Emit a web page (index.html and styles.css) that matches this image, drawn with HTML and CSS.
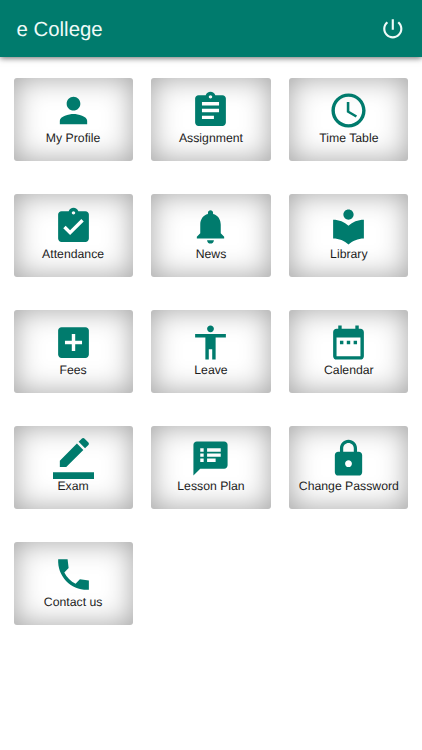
FILE: index.html
```html
<!DOCTYPE html>
<html lang="en">
<head>
<meta charset="utf-8">
<title>e College</title>
<link rel="stylesheet" href="styles.css">
</head>
<body>
<header class="toolbar">
  <h1 class="title">e College</h1>
  <svg class="power" viewBox="0 0 24 24"><path d="M13 3h-2v10h2V3zm4.83 2.17l-1.42 1.42C17.99 7.86 19 9.81 19 12c0 3.87-3.13 7-7 7s-7-3.13-7-7c0-2.19 1.01-4.14 2.58-5.42L6.17 5.17C4.23 6.82 3 9.26 3 12c0 4.97 4.03 9 9 9s9-4.03 9-9c0-2.74-1.23-5.18-3.17-6.83z"/></svg>
</header>
<main class="grid">
  <div class="card"><svg class="icon" viewBox="0 0 24 24"><path d="M12 12c2.21 0 4-1.79 4-4s-1.79-4-4-4-4 1.79-4 4 1.79 4 4 4zm0 2c-2.67 0-8 1.34-8 4v2h16v-2c0-2.66-5.33-4-8-4z"/></svg><span class="label">My Profile</span></div>
  <div class="card"><svg class="icon" viewBox="0 0 24 24"><path d="M19 3h-4.180C14.400 1.840 13.300 1 12 1c-1.300 0-2.400.84-2.820 2H5c-1.100 0-2 .9-2 2v14c0 1.100.9 2 2 2h14c1.100 0 2-.9 2-2V5c0-1.100-.9-2-2-2zm-7 0c.55 0 1 .45 1 1s-.45 1-1 1-1-.45-1-1 .45-1 1-1zm2 14H7v-2h7v2zm3-4H7v-2h10v2zm0-4H7V7h10v2z"/></svg><span class="label">Assignment</span></div>
  <div class="card"><svg class="icon" viewBox="0 0 24 24"><path d="M11.990 2C6.470 2 2 6.480 2 12s4.470 10 9.990 10C17.520 22 22 17.520 22 12S17.520 2 11.990 2zM12 20c-4.420 0-8-3.580-8-8s3.580-8 8-8 8 3.580 8 8-3.580 8-8 8zm.5-13H11v6l5.250 3.150.75-1.230-4.500-2.670z"/></svg><span class="label">Time Table</span></div>
  <div class="card"><svg class="icon" viewBox="0 0 24 24"><path d="M19 3h-4.180C14.400 1.840 13.300 1 12 1c-1.300 0-2.400.84-2.820 2H5c-1.100 0-2 .9-2 2v14c0 1.100.9 2 2 2h14c1.100 0 2-.9 2-2V5c0-1.100-.9-2-2-2zm-7 0c.55 0 1 .45 1 1s-.45 1-1 1-1-.45-1-1 .45-1 1-1zm-2 14l-4-4 1.410-1.410L10 14.170l6.590-6.590L18 9l-8 8z"/></svg><span class="label">Attendance</span></div>
  <div class="card"><svg class="icon" viewBox="0 0 24 24"><path d="M12 22c1.100 0 2-.9 2-2h-4c0 1.100.89 2 2 2zm6-6v-5c0-3.070-1.640-5.640-4.500-6.320V4c0-.83-.67-1.500-1.500-1.500s-1.500.67-1.500 1.500v.68C7.630 5.360 6 7.920 6 11v5l-2 2v1h16v-1l-2-2z"/></svg><span class="label">News</span></div>
  <div class="card"><svg class="icon" viewBox="0 0 24 24"><path d="M12 11.550C9.640 9.350 6.480 8 3 8v11c3.480 0 6.640 1.350 9 3.550 2.360-2.190 5.520-3.550 9-3.550V8c-3.480 0-6.640 1.350-9 3.550zM12 8c1.660 0 3-1.340 3-3s-1.340-3-3-3-3 1.340-3 3 1.340 3 3 3z"/></svg><span class="label">Library</span></div>
  <div class="card"><svg class="icon" viewBox="0 0 24 24"><path d="M19 3H5c-1.110 0-2 .9-2 2v14c0 1.100.89 2 2 2h14c1.100 0 2-.9 2-2V5c0-1.100-.9-2-2-2zm-2 10h-4v4h-2v-4H7v-2h4V7h2v4h4v2z"/></svg><span class="label">Fees</span></div>
  <div class="card"><svg class="icon" viewBox="0 0 24 24"><path d="M12 2c1.100 0 2 .9 2 2s-.9 2-2 2-2-.9-2-2 .9-2 2-2zm9 7h-6v13h-2v-6h-2v6H9V9H3V7h18v2z"/></svg><span class="label">Leave</span></div>
  <div class="card"><svg class="icon" viewBox="0 0 24 24"><path d="M9 11H7v2h2v-2zm4 0h-2v2h2v-2zm4 0h-2v2h2v-2zm2-7h-1V2h-2v2H8V2H6v2H5c-1.110 0-1.990.9-1.990 2L3 20c0 1.100.89 2 2 2h14c1.100 0 2-.9 2-2V6c0-1.100-.9-2-2-2zm0 16H5V9h14v11z"/></svg><span class="label">Calendar</span></div>
  <div class="card"><svg class="icon" viewBox="0 0 24 24"><path d="M17.750 7L14 3.250l-10 10V17h3.750l10-10zm2.960-2.960c.39-.39.39-1.020 0-1.410L18.370.29c-.39-.39-1.020-.39-1.410 0L15 2.250 18.750 6l1.960-1.960zM0 20h24v4H0z"/></svg><span class="label">Exam</span></div>
  <div class="card"><svg class="icon" viewBox="0 0 24 24"><path d="M20 2H4c-1.100 0-1.990.9-1.990 2L2 22l4-4h14c1.100 0 2-.9 2-2V4c0-1.100-.9-2-2-2zM8 14H6v-2h2v2zm0-3H6V9h2v2zm0-3H6V6h2v2zm7 6h-5v-2h5v2zm3-3h-8V9h8v2zm0-3h-8V6h8v2z"/></svg><span class="label">Lesson Plan</span></div>
  <div class="card"><svg class="icon" viewBox="0 0 24 24"><path d="M18 8h-1V6c0-2.760-2.240-5-5-5S7 3.240 7 6v2H6c-1.100 0-2 .9-2 2v10c0 1.100.9 2 2 2h12c1.100 0 2-.9 2-2V10c0-1.100-.9-2-2-2zm-6 9c-1.100 0-2-.9-2-2s.9-2 2-2 2 .9 2 2-.9 2-2 2zm3.100-9H8.900V6c0-1.710 1.390-3.100 3.100-3.100 1.710 0 3.100 1.390 3.100 3.100v2z"/></svg><span class="label">Change Password</span></div>
  <div class="card"><svg class="icon" viewBox="0 0 24 24"><path d="M21 15.460l-5.270-.61-2.520 2.520c-2.830-1.440-5.150-3.750-6.590-6.590l2.530-2.530L8.540 3H3.030C2.450 13.180 10.820 21.550 21 20.970v-5.510z"/></svg><span class="label">Contact us</span></div>
</main>
</body>
</html>
```
FILE: styles.css
```css
* { box-sizing: border-box; }

body {
  margin: 0;
  min-height: 750px;
  background: #fff;
  font-family: "Liberation Sans", Arial, sans-serif;
  text-rendering: geometricPrecision;
}

.toolbar {
  display: flex;
  align-items: center;
  justify-content: space-between;
  height: 57px;
  padding: 0 16px 0 16.5px;
  background: #007b6d;
  box-shadow: 0 1px 6px rgba(0, 0, 0, .6);
}

.title {
  margin: 3px 0 0;
  font-size: 20.4px;
  font-weight: 400;
  line-height: 26px;
  color: #effaf8;
}

.power {
  width: 25.6px;
  height: 25.6px;
  fill: #effaf8;
}

.grid {
  display: grid;
  grid-template-columns: repeat(3, 119.2px);
  grid-auto-rows: 83.4px;
  gap: 32.6px 18.7px;
  padding: 20.8px 13.5px;
}

.card {
  display: flex;
  flex-direction: column;
  align-items: center;
  padding-top: 12px;
  border-radius: 3px;
  background: #fff;
  box-shadow: inset 0 0 29px rgba(0, 0, 0, .37);
}

.icon {
  flex: none;
  width: 41px;
  height: 41px;
  fill: #007b6d;
}

.label {
  font-size: 12.25px;
  line-height: 14px;
  white-space: nowrap;
  color: #1c1c1c;
}
```
